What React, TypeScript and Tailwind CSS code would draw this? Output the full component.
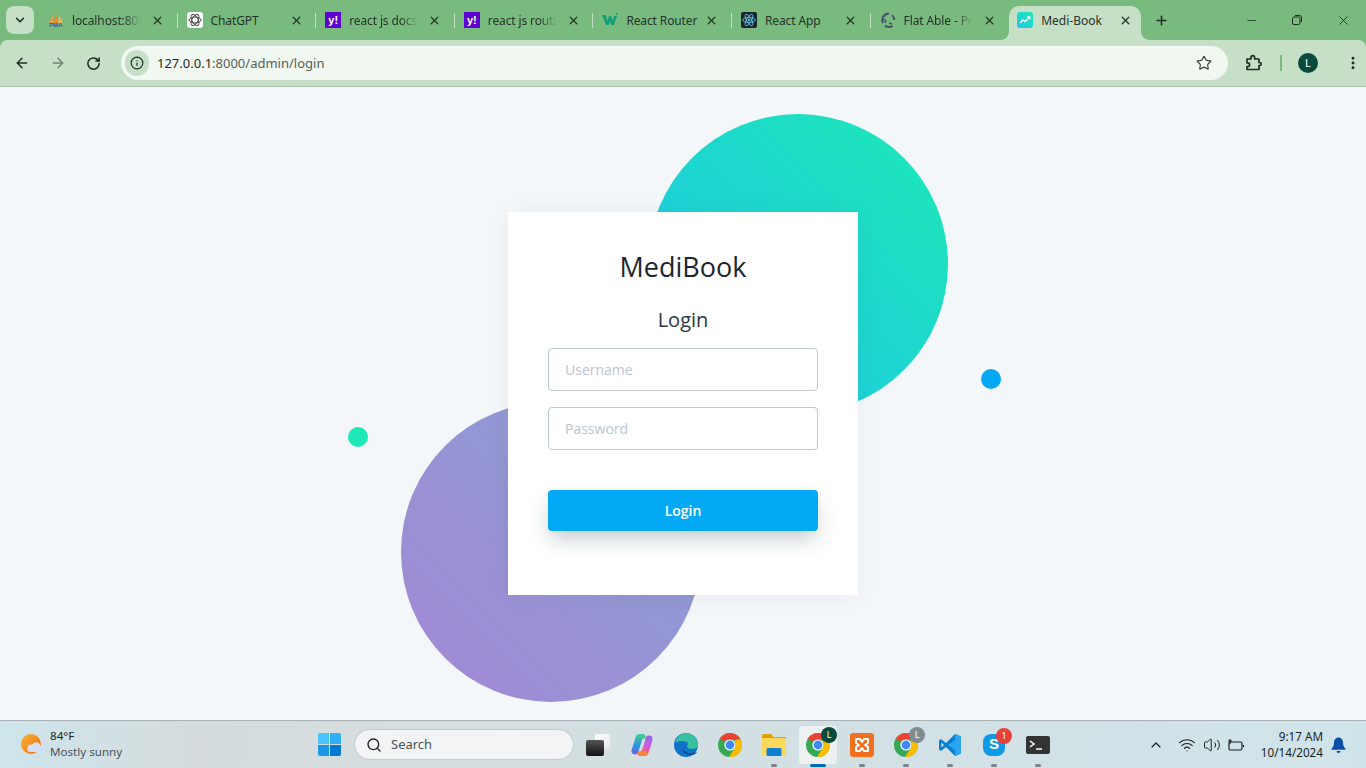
import { ArrowLeft, ArrowRight, ChevronDown, ChevronUp, EllipsisVertical, Info, Minus, Plus, RotateCw, Search, Star, Volume2, Wifi, X } from "lucide-react";
import type { ReactNode } from "react";

const uiFont = "font-['Noto_Sans',sans-serif]";

function ChromeIcon({ size = 24 }: { size?: number }) {
  return (
    <svg width={size} height={size} viewBox="0 0 24 24" aria-hidden="true">
      <circle cx="12" cy="12" r="12" fill="#34a853" />
      <path d="M12 0a12 12 0 0 1 10.4 6H12a6 6 0 0 0-5.2 3L1.9 5.6A12 12 0 0 1 12 0Z" fill="#ea4335" />
      <path d="M22.4 6A12 12 0 0 1 11 24l5.6-9a6 6 0 0 0-.2-7.5Z" fill="#fbbc04" />
      <circle cx="12" cy="12" r="5.6" fill="#fff" />
      <circle cx="12" cy="12" r="4.4" fill="#4285f4" />
    </svg>
  );
}

function PmaIcon() {
  return (
    <div className="flex h-4 w-4 flex-col items-center">
      <svg width="16" height="11" viewBox="0 0 16 11" aria-hidden="true">
        <path d="M1 11 4.8 3.5 5.4 11Z" fill="#e9a23b" />
        <path d="M6 11 8 0l1.6 11Z" fill="#e88a25" />
        <path d="M10.2 11 11.2 3 15 11Z" fill="#f2b655" />
      </svg>
      <span className="font-['Liberation_Sans',sans-serif] text-[6px] leading-[5px] font-bold text-[#3f4f9a]">PMA</span>
    </div>
  );
}

function GptIcon() {
  return (
    <div className="flex h-4 w-4 items-center justify-center rounded-[3px] bg-white">
      <svg width="14" height="14" viewBox="-7 -7 14 14" fill="none" stroke="#444" strokeWidth="1" aria-hidden="true">
        <ellipse rx="6" ry="3" />
        <ellipse rx="6" ry="3" transform="rotate(60)" />
        <ellipse rx="6" ry="3" transform="rotate(120)" />
      </svg>
    </div>
  );
}

function YahooIcon() {
  return (
    <div className="flex h-4 w-4 items-center justify-center bg-[#5f01d1] font-['Liberation_Sans',sans-serif] text-[11px] leading-none font-bold text-white">
      y!
    </div>
  );
}

function WIcon() {
  return (
    <svg width="16" height="16" viewBox="0 0 16 16" aria-hidden="true">
      <path d="M0 3h3.6l1.8 6 1.6-5h2.2l1.6 5 1.2-5H15L11.8 13H9.2L8 9l-1.2 4H4.2Z" fill="#0f9d76" />
      <circle cx="14.6" cy="2" r="1.1" fill="#0f9d76" />
    </svg>
  );
}

function ReactIcon() {
  return (
    <div className="flex h-4 w-4 items-center justify-center rounded-[2px] bg-[#20232a]">
      <svg width="14" height="14" viewBox="-12 -12 24 24" fill="none" stroke="#61dafb" strokeWidth="1.3" aria-hidden="true">
        <circle r="2" fill="#61dafb" stroke="none" />
        <ellipse rx="11" ry="4.2" />
        <ellipse rx="11" ry="4.2" transform="rotate(60)" />
        <ellipse rx="11" ry="4.2" transform="rotate(120)" />
      </svg>
    </div>
  );
}

function FlatIcon() {
  return (
    <svg width="16" height="16" viewBox="0 0 16 16" fill="none" stroke="#44546a" strokeWidth="2" aria-hidden="true">
      <path d="M3 11A6.5 6.5 0 0 1 9 1.6M12 3.2A6.5 6.5 0 0 1 14.4 8M5 13.6a6.5 6.5 0 0 0 7.5.2" />
      <path d="M3 7l3 2-1 2M9 11l3 1" strokeWidth="1.4" />
    </svg>
  );
}

function MediIcon() {
  return (
    <div className="flex h-4 w-4 items-center justify-center rounded-[3px] bg-linear-[225deg,#1de9b6,#1dc4e9]">
      <svg width="12" height="12" viewBox="0 0 12 12" fill="none" stroke="#fff" strokeWidth="1.4" aria-hidden="true">
        <path d="M1 9l3-3 2 1.5L10.5 3" />
        <path d="M8 2.6h3v3" strokeWidth="1" />
      </svg>
    </div>
  );
}

// titles are what Chrome leaves visible before the fade
const tabs: { title: string; icon: ReactNode; fade?: boolean; noSeparator?: boolean }[] = [
  { title: "localhost:808", icon: <PmaIcon />, fade: true },
  { title: "ChatGPT", icon: <GptIcon /> },
  { title: "react js docs", icon: <YahooIcon />, fade: true },
  { title: "react js routi", icon: <YahooIcon />, fade: true },
  { title: "React Router", icon: <WIcon /> },
  { title: "React App", icon: <ReactIcon /> },
  { title: "Flat Able - Pr", icon: <FlatIcon />, fade: true, noSeparator: true },
];

function Tab({ title, icon, fade, noSeparator }: { title: string; icon: ReactNode; fade?: boolean; noSeparator?: boolean }) {
  return (
    <div className="relative flex h-[40px] w-[138.6px] shrink-0 items-center pl-[8px]">
      <div className="shrink-0">{icon}</div>
      <div
        className={`mt-[1px] ml-[8px] w-[72px] text-[12px] tracking-[-0.01em] whitespace-nowrap text-[#26332a] ${
          fade ? "[mask-image:linear-gradient(to_right,black_72%,transparent_96%)]" : ""
        }`}
      >
        {title}
      </div>
      <X className="ml-[7px] h-[13px] w-[13px] shrink-0 text-[#26332a]" strokeWidth={2.4} />
      {!noSeparator && <div className="absolute top-[13px] right-[1px] h-[15px] w-px bg-[#c6e0c7]" />}
    </div>
  );
}

function TabStrip() {
  return (
    <div className={`flex h-[40px] ${uiFont}`}>
      <div className="flex w-[40px] shrink-0 items-start pt-[6px] pl-[6px]">
        <div className="flex h-[28px] w-[28px] items-center justify-center rounded-[8px] bg-[#c6e0c7]">
          <ChevronDown className="h-[14px] w-[14px] text-[#1f2b22]" strokeWidth={2.6} />
        </div>
      </div>
      {tabs.map((t) => (
        <Tab key={t.title} {...t} />
      ))}
      <div className="relative -ml-[1px] flex h-[34px] w-[132px] shrink-0 items-center self-end rounded-t-[10px] bg-[#c6e0c7] pb-[6px] pl-[8px]">
        <div className="absolute bottom-0 -left-[8px] h-[8px] w-[8px] bg-[radial-gradient(circle_at_0_0,transparent_7.5px,#c6e0c7_8px)]" />
        <div className="absolute -right-[8px] bottom-0 h-[8px] w-[8px] bg-[radial-gradient(circle_at_100%_0,transparent_7.5px,#c6e0c7_8px)]" />
        <MediIcon />
        <span className="mt-[1px] ml-[8px] w-[78px] text-[12px] whitespace-nowrap text-[#26332a]">Medi-Book</span>
        <X className="h-[13px] w-[13px] shrink-0 text-[#26332a]" strokeWidth={2.4} />
      </div>
      <div className="ml-[13px] flex h-[40px] items-center">
        <Plus className="h-[15px] w-[15px] text-[#1f2b22]" strokeWidth={2.4} />
      </div>
      <div className="ml-auto flex h-[40px] items-center text-[#1f2b22]">
        <div className="flex w-[46px] justify-center">
          <Minus className="h-[13px] w-[13px]" strokeWidth={1.4} />
        </div>
        <div className="flex w-[46px] justify-center">
          <svg width="12" height="12" viewBox="0 0 12 12" fill="none" stroke="currentColor" aria-hidden="true">
            <rect x="1.5" y="3" width="7.5" height="7.5" rx="1.5" />
            <path d="M4 1.5h4.5A2 2 0 0 1 10.5 3.5V8" />
          </svg>
        </div>
        <div className="flex w-[46px] justify-center">
          <X className="h-[15px] w-[15px]" strokeWidth={1.3} />
        </div>
      </div>
    </div>
  );
}

function Toolbar() {
  return (
    <div className={`flex h-[47px] items-center rounded-t-[8px] border-b border-[#a9bfaa] bg-[#c6e0c7] ${uiFont}`}>
      <div className="flex w-[121px] shrink-0 items-center text-[#1f2b22]">
        <ArrowLeft className="ml-[14px] h-[16px] w-[16px]" strokeWidth={2.2} />
        <ArrowRight className="ml-[20px] h-[16px] w-[16px] text-[#6f8572]" strokeWidth={2.2} />
        <RotateCw className="ml-[20px] h-[15px] w-[15px]" strokeWidth={2.4} />
      </div>
      <div className="flex h-[34px] w-[1107px] shrink-0 items-center rounded-full bg-[#f1f7f1] pl-[4px]">
        <div className="flex h-[26px] w-[24px] items-center justify-center rounded-full bg-[#c6e0c7]">
          <Info className="h-[14px] w-[14px] text-[#1f2b22]" strokeWidth={2} />
        </div>
        <span className="mt-[1px] ml-[8px] text-[13px] text-[#1f2b22]">
          127.0.0.1<span className="text-[#536357]">:8000/admin/login</span>
        </span>
        <Star className="mr-[16px] ml-auto h-[16px] w-[16px] text-[#3b473e]" strokeWidth={1.8} />
      </div>
      <div className="flex shrink-0 items-center text-[#1f2b22]">
        <svg className="ml-[17px]" width="18" height="18" viewBox="0 0 18 18" fill="none" stroke="currentColor" strokeWidth="1.7" aria-hidden="true">
          <path d="M2 5h4V3.5a1.8 1.8 0 0 1 3.6 0V5H14v3.5h.6a1.6 1.6 0 0 1 0 3.2H14V15.5H2v-3h.8a1.8 1.8 0 0 0 0-3.6H2Z" strokeLinejoin="round" />
        </svg>
        <div className="ml-[17px] h-[16px] w-[2px] bg-[#79bb7e]" />
        <div className="ml-[16px] flex h-[20px] w-[20px] items-center justify-center rounded-full bg-[#0a4a3c] text-[11px] text-white">L</div>
        <EllipsisVertical className="ml-[27px] h-[16px] w-[16px]" strokeWidth={2.4} />
      </div>
    </div>
  );
}

function LoginPage() {
  return (
    <main className="relative flex h-[633px] items-center justify-center overflow-hidden bg-[#f4f7fa] font-['Open_Sans',sans-serif]">
      {/* decorative circles */}
      <div className="absolute top-[27px] left-[648px] h-[300px] w-[300px] rounded-full bg-linear-[225deg,#1de9b6,#1dc4e9]" />
      <div className="absolute top-[315px] left-[401px] h-[300px] w-[300px] rounded-full bg-linear-[225deg,#899fd4,#a389d4]" />
      <div className="absolute top-[340px] left-[348px] h-[20px] w-[20px] rounded-full bg-[#1de9b6]" />
      <div className="absolute top-[282px] left-[981px] h-[20px] w-[20px] rounded-full bg-[#04a9f5]" />

      <div className="relative flex h-[383px] w-[350px] flex-col items-center bg-white px-[40px] pt-[35px] shadow-[0_1px_20px_0_rgba(69,90,100,0.08)]">
        <h1 className="text-[27px] leading-[40px] text-[#1d2630]">MediBook</h1>
        <h2 className="mt-[18px] text-[20px] leading-[30px] text-[#2b3743]">Login</h2>
        <input
          placeholder="Username"
          className="mt-[13px] h-[43px] w-[270px] shrink-0 rounded-[4px] border border-[#bcc8d6] bg-white px-[16px] text-[14px] outline-none placeholder:text-[#bcc5d1]"
        />
        <input
          placeholder="Password"
          className="mt-[16px] h-[43px] w-[270px] shrink-0 rounded-[4px] border border-[#bcc8d6] bg-white px-[16px] text-[14px] outline-none placeholder:text-[#bcc5d1]"
        />
        <button
          type="button"
          className="mt-[40px] h-[41px] w-[270px] shrink-0 rounded-[4px] bg-[#04a9f5] text-[14px] font-semibold text-white shadow-[0_10px_20px_-2px_rgba(69,90,100,0.3)]"
        >
          Login
        </button>
      </div>
    </main>
  );
}

function Dash({ active }: { active?: boolean }) {
  return active ? (
    <div className="absolute bottom-[2px] left-1/2 h-[3px] w-[16px] -translate-x-1/2 rounded-full bg-[#0067c0]" />
  ) : (
    <div className="absolute bottom-[2px] left-1/2 h-[3px] w-[6px] -translate-x-1/2 rounded-full bg-[#7d8487]" />
  );
}

function TaskItem({ children, dash, active }: { children: ReactNode; dash?: boolean; active?: boolean }) {
  return (
    <div className="relative flex h-[48px] w-[44px] shrink-0 items-center justify-center">
      {active && <div className="absolute top-[5px] left-[3px] h-[38px] w-[38px] rounded-[4px] bg-[#eef1f2]" />}
      <div className="relative flex items-center justify-center">{children}</div>
      {dash && <Dash active={active} />}
    </div>
  );
}

function AccountBadge({ color, children }: { color: string; children: ReactNode }) {
  return (
    <div className={`absolute -top-[6px] -right-[7px] flex h-[16px] w-[16px] items-center justify-center rounded-full text-[9px] text-white ${color}`}>
      {children}
    </div>
  );
}

function Taskbar() {
  return (
    <footer className={`flex h-[48px] items-center border-t border-[#aab4b8] bg-linear-to-r from-[#cde5ec] via-[#d6dcdd] via-[14%] to-[#cfe4ea] ${uiFont}`}>
      <div className="flex w-[315px] shrink-0 items-center pl-[20px]">
        <svg width="24" height="24" viewBox="0 0 24 24" aria-hidden="true">
          <defs>
            <linearGradient id="sun" x1="0" y1="0" x2="1" y2="1">
              <stop offset="0" stopColor="#f9b233" />
              <stop offset="1" stopColor="#ee6f12" />
            </linearGradient>
          </defs>
          <circle cx="11" cy="11" r="10" fill="url(#sun)" />
          <path d="M10 19h10a3 3 0 0 0 .6-6 4.6 4.6 0 0 0-8.6-1.2A3.6 3.6 0 0 0 10 19Z" fill="#d4dff5" />
        </svg>
        <div className="mb-[2px] ml-[6px] flex flex-col text-[11.6px] leading-[16px]">
          <span className="text-[#1b1f22]">84°F</span>
          <span className="text-[#4a5156]">Mostly sunny</span>
        </div>
      </div>
      <div className="ml-[3px] grid h-[23px] w-[23px] shrink-0 grid-cols-2 gap-px">
        <div className="rounded-tl-[2px] bg-[#4cc2ff]" />
        <div className="rounded-tr-[2px] bg-[#30aef5]" />
        <div className="rounded-bl-[2px] bg-[#1a98e8]" />
        <div className="rounded-br-[2px] bg-[#0078d4]" />
      </div>
      <div className="ml-[13px] flex h-[31px] w-[220px] shrink-0 items-center rounded-full border border-[#c3c9cc] bg-[#f2f4f5] pl-[11px]">
        <Search className="h-[16px] w-[16px] text-[#1b1f22]" strokeWidth={2} />
        <span className="ml-[9px] text-[13px] text-[#4a5156]">Search</span>
      </div>
      <div className="ml-[2px] flex shrink-0">
        <TaskItem>
          <div className="relative h-[22px] w-[24px]">
            <div className="absolute top-0 right-0 h-[15px] w-[15px] rounded-[2px] bg-linear-to-br from-white to-[#e4e7e8]" />
            <div className="absolute bottom-0 left-0 h-[16px] w-[18px] rounded-[2px] bg-linear-to-b from-[#555555] to-[#141414]" />
          </div>
        </TaskItem>
        <TaskItem>
          <svg width="24" height="24" viewBox="0 0 24 24" fill="none" strokeLinecap="round" aria-hidden="true">
            <defs>
              <linearGradient id="copL" gradientUnits="userSpaceOnUse" x1="8" y1="1" x2="6" y2="22">
                <stop offset="0" stopColor="#3fc79a" />
                <stop offset="0.6" stopColor="#2f8fe8" />
                <stop offset="1" stopColor="#7a5ce0" />
              </linearGradient>
              <linearGradient id="copR" gradientUnits="userSpaceOnUse" x1="19" y1="2" x2="14" y2="23">
                <stop offset="0" stopColor="#7f6be8" />
                <stop offset="0.5" stopColor="#d35ce0" />
                <stop offset="1" stopColor="#f5663b" />
              </linearGradient>
            </defs>
            <path d="M9 5C8 9 6.5 13 5 18" stroke="url(#copL)" strokeWidth="7" />
            <path d="M19 6c-1 5-2.500 9-4 13" stroke="url(#copR)" strokeWidth="7" />
            <path d="M9 3.500h4" stroke="#3fc79a" strokeWidth="5" />
            <path d="M10 20.500h5" stroke="#f5853b" strokeWidth="5" />
          </svg>
        </TaskItem>
        <TaskItem>
          <svg width="24" height="24" viewBox="0 0 24 24" aria-hidden="true">
            <circle cx="12" cy="12" r="12" fill="#1173c8" />
            <path d="M1 10C3 3 8 0 12 0c6 0 12 5 12 11 0 3-2 5-6 5-3 0-5-1-5-3 0-1 1-1 1-2 0-2-3-3-6-3-3 0-6 1-7 2Z" fill="#35c1a2" />
            <path d="M8 14c0 5 4 8 9 8 3 0 5-1 6-3-2 1-4 1-6 1-5 0-8-2-9-6Z" fill="#0c4a8f" />
          </svg>
        </TaskItem>
        <TaskItem>
          <ChromeIcon />
        </TaskItem>
        <TaskItem dash>
          <svg width="24" height="24" viewBox="0 0 24 24" aria-hidden="true">
            <path d="M0 2.500A1.500 1.500 0 0 1 1.500 1H9l2.500 3H24v3H0Z" fill="#e0a100" />
            <rect y="5" width="24" height="18" rx="1" fill="#fcd95c" />
            <rect x="4.500" y="15" width="15" height="8" rx="1.500" fill="#0f7fd1" />
          </svg>
        </TaskItem>
        <TaskItem dash active>
          <ChromeIcon />
          <AccountBadge color="bg-[#0a4a3c]">L</AccountBadge>
        </TaskItem>
        <TaskItem dash>
          <div className="flex h-[24px] w-[24px] items-center justify-center rounded-[3px] bg-[#f0701e]">
            <svg width="18" height="18" viewBox="0 0 18 18" fill="none" stroke="#fff" strokeWidth="2" strokeLinejoin="round" aria-hidden="true">
              <path d="M3 3h4l2 3 2-3h4v4l-3 2 3 2v4h-4l-2-3-2 3H3v-4l3-2-3-2Z" />
            </svg>
          </div>
        </TaskItem>
        <TaskItem dash>
          <ChromeIcon />
          <AccountBadge color="bg-[#7f8c92]">L</AccountBadge>
        </TaskItem>
        <TaskItem dash>
          <svg width="24" height="24" viewBox="0 0 24 24" aria-hidden="true">
            <path d="M17 1 8 10 3 6 1 7.500v9L3 18l5-4 9 9 6-2.500v-17Z" fill="#0a7fd0" />
            <path d="M17 1l6 2.500v17L17 23Zm0 6L10 12l7 5Z" fill="#2ba5ef" fillRule="evenodd" />
            <path d="M3.500 9.500 6 12l-2.500 2.500Z" fill="#d6dcdd" />
          </svg>
        </TaskItem>
        <TaskItem dash>
          <div className="flex h-[22px] w-[22px] items-center justify-center rounded-[8px] bg-[#0f9ae6] font-['Liberation_Sans',sans-serif] text-[15px] font-bold text-white">
            S
          </div>
          <AccountBadge color="bg-[#e8403a]">1</AccountBadge>
        </TaskItem>
        <TaskItem dash>
          <div className="flex h-[18px] w-[24px] items-center rounded-[2px] bg-[#333] pl-[3px]">
            <svg width="16" height="12" viewBox="0 0 16 12" fill="none" stroke="#fff" strokeWidth="1.500" aria-hidden="true">
              <path d="M1 2l4 3-4 3" />
              <path d="M7 10h6" />
            </svg>
          </div>
        </TaskItem>
      </div>
      <div className="ml-auto flex shrink-0 items-center pr-[20px] text-[#1b1f22]">
        <ChevronUp className="h-[16px] w-[16px]" strokeWidth={1.8} />
        <Wifi className="ml-[14px] h-[18px] w-[18px]" strokeWidth={1.5} />
        <Volume2 className="ml-[7px] h-[18px] w-[18px]" strokeWidth={1.3} />
        <svg className="ml-[6px]" width="18" height="14" viewBox="0 0 18 14" fill="none" stroke="currentColor" strokeWidth="1.2" aria-hidden="true">
          <rect x="2" y="4" width="13" height="8" rx="1.500" />
          <path d="M16.500 7v2M3 1v5M1 3h4" />
        </svg>
        <div className="mb-[2px] ml-[16px] flex w-[62px] flex-col items-end text-[11.7px] leading-[16px] whitespace-nowrap">
          <span>9:17 AM</span>
          <span>10/14/2024</span>
        </div>
        <svg className="ml-[8px]" width="15" height="16" viewBox="0 0 15 16" fill="#0b4fa8" aria-hidden="true">
          <path d="M7.500 0.500A4.600 4.600 0 0 0 3 5.200c0 4-1.600 5.400-2.500 6.600v1h14v-1c-.9-1.200-2.500-2.600-2.500-6.600A4.600 4.600 0 0 0 7.500.5ZM5.500 14a2 2 0 0 0 4 0Z" />
        </svg>
      </div>
    </footer>
  );
}

export default function App() {
  return (
    <div className="flex h-[768px] w-[1366px] flex-col overflow-hidden">
      <div className="bg-[#79bb7e]">
        <TabStrip />
        <Toolbar />
      </div>
      <LoginPage />
      <Taskbar />
    </div>
  );
}
